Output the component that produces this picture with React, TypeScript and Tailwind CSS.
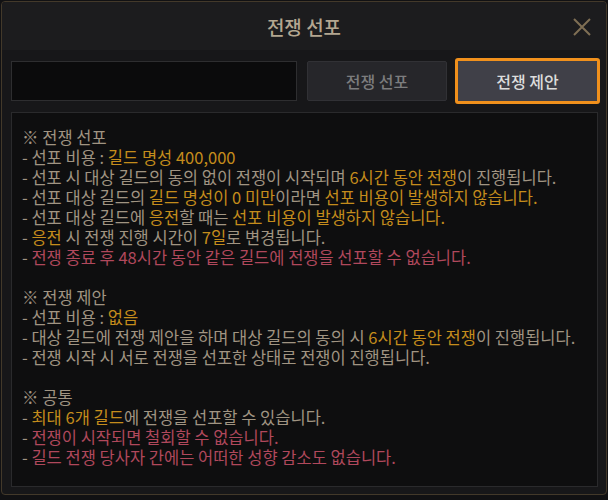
import React from "react";

type Seg = { t: string; c?: "g" | "r" };
type Line = Seg[];

const N = "text-[#a09482]";
const G = "text-[#c48c1c]";
const R = "text-[#b0485c]";

const sections: { title: string; lines: Line[] }[] = [
  {
    title: "※ 전쟁 선포",
    lines: [
      [{ t: "선포 비용 : " }, { t: "길드 명성 400,000", c: "g" }],
      [
        { t: "선포 시 대상 길드의 동의 없이 전쟁이 시작되며 " },
        { t: "6시간 동안 전쟁", c: "g" },
        { t: "이 진행됩니다." },
      ],
      [
        { t: "선포 대상 길드의 " },
        { t: "길드 명성이 0 미만", c: "g" },
        { t: "이라면 " },
        { t: "선포 비용이 발생하지 않습니다.", c: "g" },
      ],
      [
        { t: "선포 대상 길드에 " },
        { t: "응전", c: "g" },
        { t: "할 때는 " },
        { t: "선포 비용이 발생하지 않습니다.", c: "g" },
      ],
      [
        { t: "응전", c: "g" },
        { t: " 시 전쟁 진행 시간이 " },
        { t: "7일", c: "g" },
        { t: "로 변경됩니다." },
      ],
      [{ t: "전쟁 종료 후 48시간 동안 같은 길드에 전쟁을 선포할 수 없습니다.", c: "r" }],
    ],
  },
  {
    title: "※ 전쟁 제안",
    lines: [
      [{ t: "선포 비용 : " }, { t: "없음", c: "g" }],
      [
        { t: "대상 길드에 전쟁 제안을 하며 대상 길드의 동의 시 " },
        { t: "6시간 동안 전쟁", c: "g" },
        { t: "이 진행됩니다." },
      ],
      [{ t: "전쟁 시작 시 서로 전쟁을 선포한 상태로 전쟁이 진행됩니다." }],
    ],
  },
  {
    title: "※ 공통",
    lines: [
      [{ t: "최대 6개 길드", c: "g" }, { t: "에 전쟁을 선포할 수 있습니다." }],
      [{ t: "전쟁이 시작되면 철회할 수 없습니다.", c: "r" }],
      [{ t: "길드 전쟁 당사자 간에는 어떠한 성향 감소도 없습니다.", c: "r" }],
    ],
  },
];

export default function App() {
  return (
    <div
      className="w-[608px] h-[500px] bg-[#111113] pt-px pl-px"
      style={{ fontFamily: '"Noto Sans CJK KR", "Noto Sans", sans-serif' }}
    >
      <div className="w-[606px] h-[494px] border border-[#43392a] rounded-[4px] bg-[#171719] flex flex-col overflow-hidden">
        <div className="h-[48px] shrink-0 bg-[#1c1c1e] relative flex items-center justify-center">
          <span className="text-[19px] font-medium text-[#b3a690] leading-none">전쟁 선포</span>
          <svg
            className="absolute left-[570px] top-[15px]"
            width="20"
            height="20"
            viewBox="0 0 20 20"
          >
            <path d="M2 2 L18 18 M18 2 L2 18" stroke="#7f6f54" strokeWidth="2" />
          </svg>
        </div>
        <div className="mt-[8px] pl-[9px] flex items-center h-[46px]">
          <div className="w-[286px] h-[40px] bg-[#0b0b0c] border border-[#2e2e30]" />
          <button className="ml-[10px] w-[140px] h-[40px] bg-[#26262a] border border-[#313135] rounded-[2px] text-[16px] font-medium text-[#7c7c7e]">
            전쟁 선포
          </button>
          <button className="ml-[8px] w-[145px] h-[46px] bg-[#404048] border-[3px] border-[#f0901c] rounded-[3px] text-[16px] font-medium text-[#dcdcdc]">
            전쟁 제안
          </button>
        </div>
        <div className="mt-[8px] ml-[9px] w-[587px] h-[375px] bg-[#0e0e0f] border border-[#2a2a2c] pt-[14px] pl-[10px] text-[16.5px] leading-[20px] whitespace-nowrap">
          {sections.map((s, i) => (
            <div key={i} className={i > 0 ? "mt-[20px]" : ""}>
              <div className={N}>{s.title}</div>
              {s.lines.map((l, j) => (
                <div key={j}>
                  <span className={N}>- </span>
                  {l.map((seg, k) => (
                    <span key={k} className={seg.c === "g" ? G : seg.c === "r" ? R : N}>
                      {seg.t}
                    </span>
                  ))}
                </div>
              ))}
            </div>
          ))}
        </div>
      </div>
    </div>
  );
}
